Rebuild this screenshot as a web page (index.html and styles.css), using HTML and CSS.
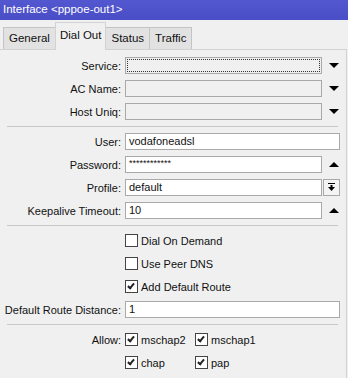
FILE: index.html
```html
<!DOCTYPE html>
<html lang="en">
<head>
    <meta charset="UTF-8">
    <title>Interface &lt;pppoe-out1&gt;</title>
    <link rel="stylesheet" href="styles.css">
</head>
<body>

    <div class="titlebar">Interface &lt;pppoe-out1&gt;</div>

    <div class="tabs">
        <div class="tab">General</div>
        <div class="tab active">Dial Out</div>
        <div class="tab">Status</div>
        <div class="tab">Traffic</div>
    </div>

    <div class="panel">
        <div class="row">
            <div class="label">Service:</div>
            <div class="field short grey"><span class="focus"></span></div>
            <div class="arrow down"></div>
        </div>
        <div class="row">
            <div class="label">AC Name:</div>
            <div class="field short grey"></div>
            <div class="arrow down"></div>
        </div>
        <div class="row">
            <div class="label">Host Uniq:</div>
            <div class="field short grey"></div>
            <div class="arrow down"></div>
        </div>

        <div class="sep"></div>

        <div class="row">
            <div class="label">User:</div>
            <div class="field">vodafoneadsl</div>
        </div>
        <div class="row">
            <div class="label">Password:</div>
            <div class="field short stars">************</div>
            <div class="arrow up"></div>
        </div>
        <div class="row">
            <div class="label">Profile:</div>
            <div class="field short">default</div>
            <div class="btn">
                <svg width="9" height="9" viewBox="0 0 9 9"><rect x="1" y="0" width="7" height="1" fill="#000"/><rect x="3.5" y="2" width="2" height="2" fill="#000"/><polygon points="1,4 8,4 4.5,8" fill="#000"/></svg>
            </div>
        </div>
        <div class="row">
            <div class="label">Keepalive Timeout:</div>
            <div class="field short">10</div>
            <div class="arrow up"></div>
        </div>

        <div class="sep"></div>

        <div class="row">
            <div class="label"></div>
            <div class="check"><span class="box"></span>Dial On Demand</div>
        </div>
        <div class="row">
            <div class="label"></div>
            <div class="check"><span class="box"></span>Use Peer DNS</div>
        </div>
        <div class="row">
            <div class="label"></div>
            <div class="check"><span class="box on"></span>Add Default Route</div>
        </div>
        <div class="row">
            <div class="label">Default Route Distance:</div>
            <div class="field">1</div>
        </div>

        <div class="sep"></div>

        <div class="row">
            <div class="label">Allow:</div>
            <div class="check col"><span class="box on"></span>mschap2</div>
            <div class="check"><span class="box on"></span>mschap1</div>
        </div>
        <div class="row">
            <div class="label"></div>
            <div class="check col"><span class="box on"></span>chap</div>
            <div class="check"><span class="box on"></span>pap</div>
        </div>
    </div>

</body>
</html>
```

FILE: styles.css
```css
body {
    margin: 0;
    background-color: #f0f0f0;
    font-family: "Liberation Sans", Arial, sans-serif;
    font-size: 11px;
    color: #111;
    width: 348px;
    height: 378px;
    overflow: hidden;
}
.titlebar {
    height: 20px;
    line-height: 19px;
    padding-left: 3px;
    background: linear-gradient(#5357d0, #4a4ec6);
    color: white;
    font-size: 11.5px;
}
.tabs {
    display: flex;
    align-items: flex-end;
    height: 29px;
    padding-left: 3px;
}
.tab {
    height: 21px;
    line-height: 21px;
    padding: 0 5px;
    background-color: #e2e2e2;
    border: 1px solid #c4c4c4;
    border-bottom: none;
    margin-right: -1px;
    font-size: 11.5px;
}
.tab.active {
    position: relative;
    height: 27px;
    line-height: 24px;
    padding: 0 4px;
    margin-bottom: -1px;
    background-color: #f0f0f0;
    border-color: #d2d2d2;
    z-index: 1;
}
.panel {
    height: 330px;
    border-top: 1px solid #d2d2d2;
    border-right: 1px solid #d2d2d2;
    margin-right: 1px;
    padding-top: 7px;
}
.row {
    display: flex;
    align-items: center;
    height: 17px;
    margin-bottom: 6px;
}
.label {
    width: 121px;
    flex: none;
    text-align: right;
    margin-right: 4px;
    white-space: nowrap;
}
.field {
    box-sizing: border-box;
    width: 215px;
    height: 17px;
    line-height: 15px;
    padding-left: 3px;
    background-color: white;
    border: 1px solid #a9a9a9;
    position: relative;
}
.field.short {
    width: 197px;
}
.field.grey {
    background-color: #f0f0f0;
}
.focus {
    position: absolute;
    left: 1px;
    top: 1px;
    right: 1px;
    bottom: 1px;
    border: 1px dotted #333;
}
.stars {
    font-size: 9px;
    line-height: 12px;
}
.arrow {
    width: 0;
    height: 0;
    margin-left: 7px;
    border-left: 5px solid transparent;
    border-right: 5px solid transparent;
}
.arrow.down {
    border-top: 5px solid #000;
}
.arrow.up {
    border-bottom: 5px solid #000;
}
.btn {
    box-sizing: border-box;
    width: 17px;
    height: 17px;
    margin-left: 1px;
    border: 1px solid #a9a9a9;
    background-color: #f4f4f4;
    display: flex;
    align-items: center;
    justify-content: center;
}
.sep {
    height: 1px;
    margin: 1px 8px 6px 7px;
    background-color: #c8c8c8;
}
.check {
    display: flex;
    align-items: center;
    white-space: nowrap;
}
.check.col {
    width: 70px;
}
.box {
    box-sizing: border-box;
    width: 13px;
    height: 13px;
    margin-right: 3px;
    background-color: white;
    border: 1px solid #444;
    position: relative;
}
.box.on::after {
    content: "";
    position: absolute;
    left: 3px;
    top: 1px;
    width: 2px;
    height: 5px;
    border-right: 2px solid #222;
    border-bottom: 2px solid #222;
    transform: rotate(40deg);
}
```
